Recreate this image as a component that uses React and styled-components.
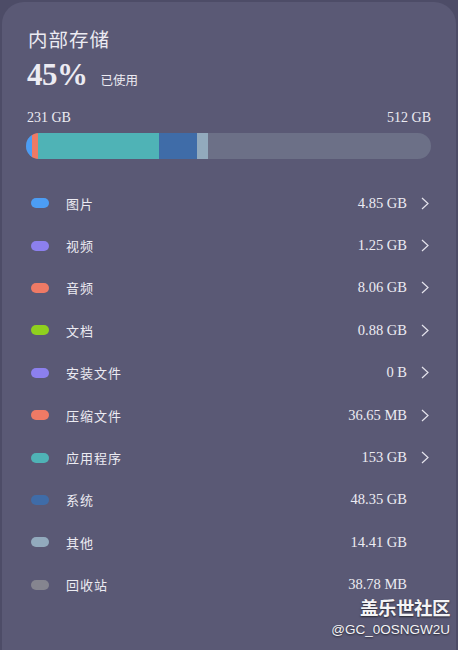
import React from "react"
import styled, { createGlobalStyle } from "styled-components"

const GlobalStyle = createGlobalStyle`
  html, body {
    margin: 0;
    padding: 0;
    background: #4d4c67;
  }
  body {
    font-family: "Liberation Serif", "Noto Sans CJK SC", serif;
    color: #ecebf2;
  }
`

const categories = [
  { name: "图片", size: "4.85 GB", color: "#4c9df4", link: true },
  { name: "视频", size: "1.25 GB", color: "#8c80ee", link: true },
  { name: "音频", size: "8.06 GB", color: "#ef7a65", link: true },
  { name: "文档", size: "0.88 GB", color: "#8fd01e", link: true },
  { name: "安装文件", size: "0 B", color: "#8c80ee", link: true },
  { name: "压缩文件", size: "36.65 MB", color: "#ef7a65", link: true },
  { name: "应用程序", size: "153 GB", color: "#4fb3b6", link: true },
  { name: "系统", size: "48.35 GB", color: "#3f6ca8", link: false },
  { name: "其他", size: "14.41 GB", color: "#92aabd", link: false },
  { name: "回收站", size: "38.78 MB", color: "#85858f", link: false },
]

// widths in px of the used part of the bar
const segments = [
  { color: "#4c9df4", width: 6 },
  { color: "#ef7a65", width: 6 },
  { color: "#4fb3b6", width: 121 },
  { color: "#3f6ca8", width: 38 },
  { color: "#92aabd", width: 11 },
]

export default function App() {
  return (
    <>
      <GlobalStyle />
      <Card>
        <Title>内部存储</Title>
        <Usage>
          <Percent>45%</Percent>
          <UsedLabel>已使用</UsedLabel>
        </Usage>
        <Capacity>
          <span>231 GB</span>
          <span>512 GB</span>
        </Capacity>
        <Bar>
          {segments.map((s, i) => (
            <Segment key={i} color={s.color} style={{ width: s.width }} />
          ))}
        </Bar>
        <List>
          {categories.map((c) => (
            <Row key={c.name}>
              <Dot color={c.color} />
              <Label>{c.name}</Label>
              <Size>{c.size}</Size>
              <Chevron>
                {c.link && (
                  <svg width="8" height="13" viewBox="0 0 8 13">
                    <path
                      d="M1 1 L7 6.5 L1 12"
                      fill="none"
                      stroke="#e4e3ec"
                      strokeWidth="1.2"
                    />
                  </svg>
                )}
              </Chevron>
            </Row>
          ))}
        </List>
        <Watermark>
          <strong>盖乐世社区</strong>
          <span>@GC_0OSNGW2U</span>
        </Watermark>
      </Card>
    </>
  )
}

const Card = styled.div`
  position: relative;
  margin: 2px 2px 0;
  min-height: 680px;
  box-sizing: border-box;
  padding: 23px 25px 0 24px;
  background: #5a5975;
  border-radius: 22px;
`

const Title = styled.div`
  font-family: "Noto Sans CJK SC", sans-serif;
  font-size: 19.5px;
  line-height: 28px;
  padding-left: 2px;
  letter-spacing: 1px;
`

const Usage = styled.div`
  display: flex;
  align-items: baseline;
  gap: 13px;
  margin-top: 4px;
  padding-left: 1px;
`

const Percent = styled.div`
  font-size: 31px;
  font-weight: bold;
  line-height: 36px;
  letter-spacing: -0.5px;
`

const UsedLabel = styled.div`
  font-family: "Noto Sans CJK SC", sans-serif;
  font-size: 12.5px;
`

const Capacity = styled.div`
  display: flex;
  justify-content: space-between;
  margin-top: 16px;
  font-size: 14px;
  line-height: 18px;
  padding-left: 1px;
`

const Bar = styled.div`
  display: flex;
  height: 26px;
  margin-top: 6px;
  border-radius: 13px;
  overflow: hidden;
  background: #6c7087;
`

const Segment = styled.div`
  height: 100%;
  background: ${(p) => p.color};
`

const List = styled.div`
  margin-top: 23px;
`

const Row = styled.div`
  display: flex;
  align-items: center;
  height: 42.4px;
  padding-left: 5px;
`

const Dot = styled.div`
  width: 18px;
  height: 10px;
  border-radius: 5px;
  background: ${(p) => p.color};
`

const Label = styled.div`
  flex: 1;
  margin-left: 17px;
  font-family: "Noto Sans CJK SC", sans-serif;
  font-size: 13px;
  letter-spacing: 1px;
`

const Size = styled.div`
  font-size: 14.5px;
`

const Chevron = styled.div`
  width: 24px;
  display: flex;
  justify-content: flex-end;
  padding-right: 2px;
  box-sizing: border-box;
`

const Watermark = styled.div`
  position: absolute;
  right: 6px;
  top: 592px;
  display: flex;
  flex-direction: column;
  align-items: flex-end;
  text-shadow: 0 1px 2px rgba(0, 0, 0, 0.6);
  font-family: "Noto Sans CJK SC", sans-serif;
  color: #f4f4f6;
  strong {
    font-size: 18.5px;
    line-height: 26px;
    letter-spacing: -0.5px;
  }
  span {
    font-size: 13.5px;
    line-height: 19px;
    font-family: "Liberation Sans", sans-serif;
  }
`
